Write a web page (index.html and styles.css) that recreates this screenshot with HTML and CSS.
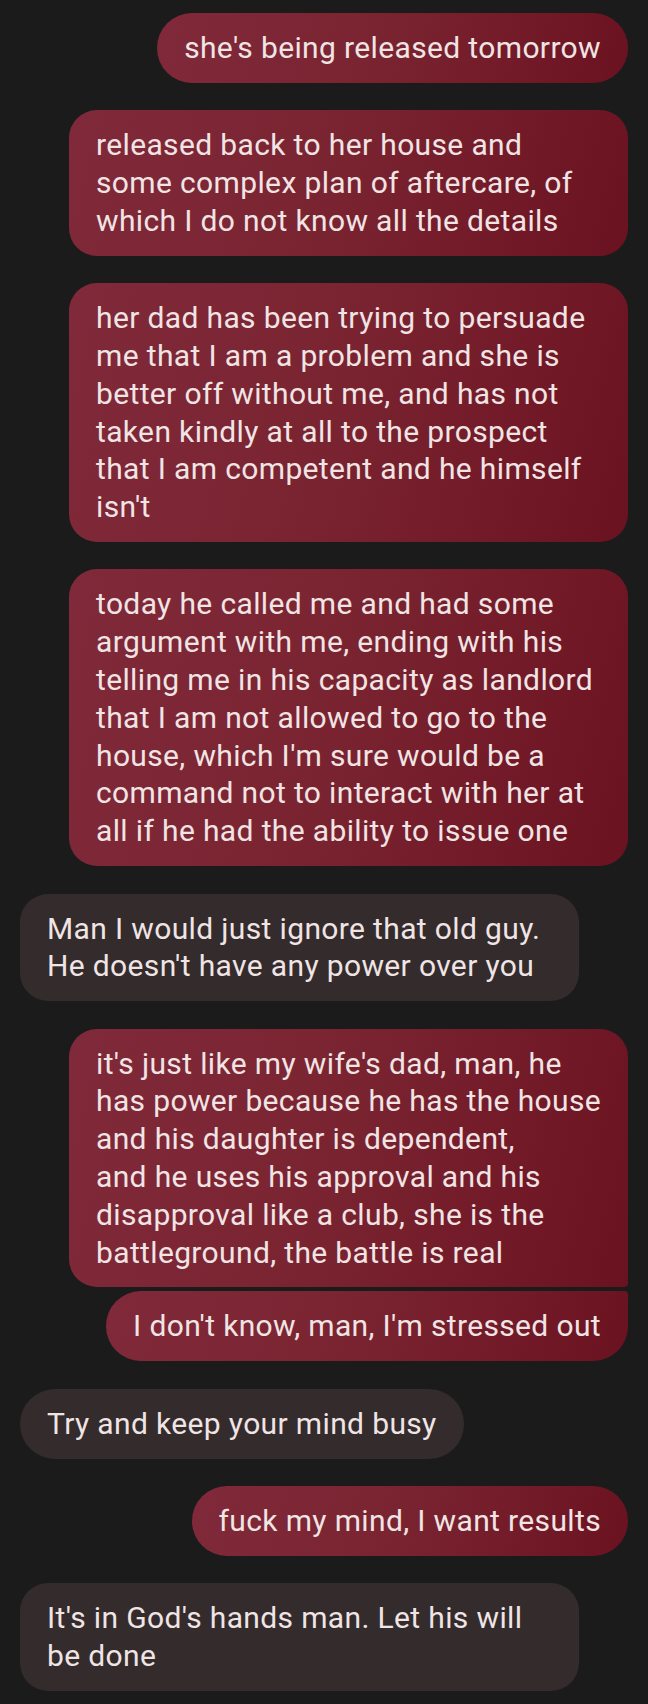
FILE: index.html
```html
<!DOCTYPE html>
<html>
<head>
<meta charset="utf-8">
<link rel="stylesheet" href="styles.css">
</head>
<body>
<div class="thread">
  <div class="bubble out pill">she's being released tomorrow</div>
  <div class="bubble out">released back to her house and some complex plan of aftercare, of which I do not know all the details</div>
  <div class="bubble out">her dad has been trying to persuade me that I am a problem and she is better off without me, and has not taken kindly at all to the prospect that I am competent and he himself isn't</div>
  <div class="bubble out">today he called me and had some argument with me, ending with his telling me in his capacity as landlord that I am not allowed to go to the house, which I'm sure would be a command not to interact with her at all if he had the ability to issue one</div>
  <div class="bubble in">Man I would just ignore that old guy. He doesn't have any power over you</div>
  <div class="group">
    <div class="bubble out first lines">it's just like my wife's dad, man, he<br>has power because he has the house<br>and his daughter is dependent,<br>and he uses his approval and his<br>disapproval like a club, she is the<br>battleground, the battle is real</div>
    <div class="bubble out pill last">I don't know, man, I'm stressed out</div>
  </div>
  <div class="bubble in pill">Try and keep your mind busy</div>
  <div class="bubble out pill">fuck my mind, I want results</div>
  <div class="bubble in">It's in God's hands man. Let his will be done</div>
</div>
</body>
</html>
```
FILE: styles.css
```css
html, body {
  margin: 0;
  padding: 0;
  background: #1c1b1b;
}
.thread {
  display: flex;
  flex-direction: column;
  gap: 27.5px;
  padding: 13px 20px 14px 20px;
  font-family: Roboto, "Noto Sans", sans-serif;
  font-size: 30px;
  line-height: 37.8px;
  letter-spacing: 0.36px;
  color: #f0e4e4;
}
.bubble {
  box-sizing: border-box;
  max-width: 559px;
  padding: 16px 27px;
  border-radius: 28px;
}
.bubble.pill {
  border-radius: 35px;
}
.bubble.lines {
  width: 559px;
  white-space: nowrap;
}
.out {
  align-self: flex-end;
  background: linear-gradient(105deg, #80293a 0%, #7a2330 50%, #6b1221 100%);
}
.in {
  align-self: flex-start;
  background: #332b2c;
}
.group {
  display: flex;
  flex-direction: column;
  gap: 4px;
}
.bubble.first {
  border-bottom-right-radius: 4px;
}
.bubble.last {
  border-top-right-radius: 4px;
}
```
